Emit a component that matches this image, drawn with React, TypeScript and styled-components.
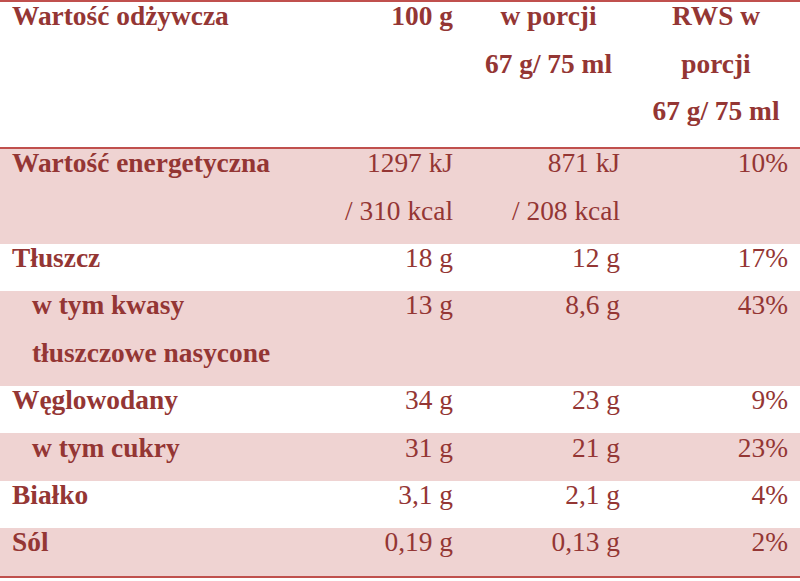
import React from "react";
import styled, { createGlobalStyle } from "styled-components";

const GlobalStyle = createGlobalStyle`
  html, body {
    margin: 0;
    padding: 0;
    background: #ffffff;
  }
`;

const Table = styled.div`
  width: 800px;
  display: flex;
  flex-direction: column;
  color: #943634;
  font-family: "Liberation Serif", "Times New Roman", serif;
  font-size: 27.4px;
  line-height: 47.4px;
  border-bottom: 2px solid #c0504d;
`;

const Row = styled.div<{ $shaded?: boolean; $header?: boolean }>`
  display: grid;
  grid-template-columns: 298px 167px 167px 168px;
  background: ${(p) => (p.$shaded ? "#efd3d2" : "transparent")};
  border-top: ${(p) => (p.$header ? "2px solid #c0504d" : "none")};
  border-bottom: ${(p) => (p.$header ? "2px solid #c0504d" : "none")};
`;

const Cell = styled.div<{
  $align?: "left" | "right" | "center";
  $bold?: boolean;
  $indent?: boolean;
  $header?: boolean;
}>`
  padding-top: 0;
  padding-right: 12px;
  padding-bottom: ${(p) => (p.$header ? "11.6px" : "8.8px")};
  padding-left: ${(p) => (p.$indent ? "32px" : "12px")};
  text-align: ${(p) => p.$align || "left"};
  font-weight: ${(p) => (p.$bold ? 700 : 400)};
  white-space: nowrap;
`;

const Text = styled.div`
  margin-top: -8.8px;
`;

type RowData = {
  label: React.ReactNode;
  indent?: boolean;
  v100: React.ReactNode;
  portion: React.ReactNode;
  rws: string;
};

const rows: RowData[] = [
  {
    label: "Wartość energetyczna",
    v100: (
      <>
        1297 kJ
        <br />/ 310 kcal
      </>
    ),
    portion: (
      <>
        871 kJ
        <br />/ 208 kcal
      </>
    ),
    rws: "10%",
  },
  { label: "Tłuszcz", v100: "18 g", portion: "12 g", rws: "17%" },
  {
    label: (
      <>
        w tym kwasy
        <br />
        tłuszczowe nasycone
      </>
    ),
    indent: true,
    v100: "13 g",
    portion: "8,6 g",
    rws: "43%",
  },
  { label: "Węglowodany", v100: "34 g", portion: "23 g", rws: "9%" },
  { label: "w tym cukry", indent: true, v100: "31 g", portion: "21 g", rws: "23%" },
  { label: "Białko", v100: "3,1 g", portion: "2,1 g", rws: "4%" },
  { label: "Sól", v100: "0,19 g", portion: "0,13 g", rws: "2%" },
];

export default function App() {
  return (
    <>
      <GlobalStyle />
      <Table>
        <Row $header>
          <Cell $bold $header>
            <Text>Wartość odżywcza</Text>
          </Cell>
          <Cell $bold $header $align="right">
            <Text>100 g</Text>
          </Cell>
          <Cell $bold $header $align="center">
            <Text>
              w porcji
              <br />
              67 g/ 75 ml
            </Text>
          </Cell>
          <Cell $bold $header $align="center">
            <Text>
              RWS w
              <br />
              porcji
              <br />
              67 g/ 75 ml
            </Text>
          </Cell>
        </Row>
        {rows.map((r, i) => (
          <Row key={i} $shaded={i % 2 === 0}>
            <Cell $bold $indent={r.indent}>
              <Text>{r.label}</Text>
            </Cell>
            <Cell $align="right">
              <Text>{r.v100}</Text>
            </Cell>
            <Cell $align="right">
              <Text>{r.portion}</Text>
            </Cell>
            <Cell $align="right">
              <Text>{r.rws}</Text>
            </Cell>
          </Row>
        ))}
      </Table>
    </>
  );
}
